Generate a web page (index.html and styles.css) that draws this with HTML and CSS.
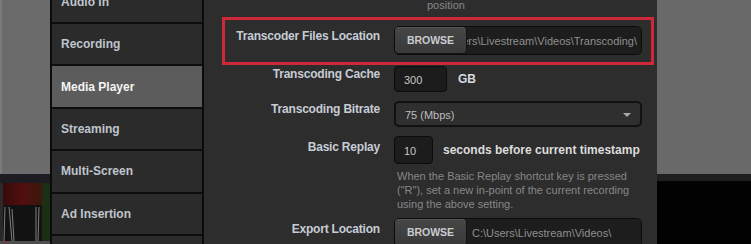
FILE: index.html
```html
<!DOCTYPE html>
<html lang="en">
<head>
<meta charset="utf-8">
<title>Media Player Settings</title>
<link rel="stylesheet" href="styles.css">
</head>
<body>
<div class="app">
  <div class="side">
    <div class="side-top"></div>
    <div class="side-band"></div>
    <svg class="thumb" viewBox="0 0 50 61" width="50" height="61">
      <defs>
        <linearGradient id="redg" x1="0" y1="0" x2="1" y2="0">
          <stop offset="0" stop-color="#360a0a"/>
          <stop offset="0.5" stop-color="#520e0e"/>
          <stop offset="1" stop-color="#3a180c"/>
        </linearGradient>
      </defs>
      <rect x="0" y="0" width="50" height="61" fill="#101010"/>
      <rect x="0" y="0" width="3" height="61" fill="#2a2a2a"/>
      <rect x="3" y="0" width="39" height="22" fill="url(#redg)"/>
      <rect x="42" y="0" width="8" height="58" fill="#1c2e13"/>
      <rect x="3" y="22" width="39" height="36" fill="#121212"/>
      <path d="M5 24 L4 58 M9 24 L12 58 M12 26 L14 58 M36 24 L36 58 M39 24 L38 58" stroke="#7e7e7e" stroke-width="1" fill="none"/>
      <rect x="0" y="58" width="50" height="3" fill="#4e4e4e"/>
      <rect x="5" y="58" width="2" height="2" fill="#b02020"/>
    </svg>
  </div>

  <nav class="nav">
    <ul class="nav-list">
      <li class="nav-item">Audio In</li>
      <li class="nav-item">Recording</li>
      <li class="nav-item is-active">Media Player</li>
      <li class="nav-item">Streaming</li>
      <li class="nav-item">Multi-Screen</li>
      <li class="nav-item">Ad Insertion</li>
      <li class="nav-item">Output</li>
    </ul>
  </nav>

  <main class="panel">
    <p class="hint hint-top">position</p>

    <div class="row row-hl">
      <div class="label label-hl">Transcoder Files Location</div>
      <div class="filefield">
        <button class="btn" type="button">BROWSE</button>
        <div class="path"><span class="path-text">C:\Users\Livestream\Videos\Transcoding\</span></div>
      </div>
    </div>

    <div class="row row-cache">
      <div class="label label-sm">Transcoding Cache</div>
      <div class="inline">
        <div class="num num-cache">300</div>
        <span class="unit">GB</span>
      </div>
    </div>

    <div class="row row-bitrate">
      <div class="label label-sm">Transcoding Bitrate</div>
      <div class="select">
        <span>75 (Mbps)</span>
        <span class="caret"></span>
      </div>
    </div>

    <div class="row row-replay">
      <div class="label label-md">Basic Replay</div>
      <div class="inline">
        <div class="num num-replay">10</div>
        <span class="unit unit-long">seconds before current timestamp</span>
      </div>
    </div>

    <div class="row row-help">
      <div></div>
      <p class="hint help">When the Basic Replay shortcut key is pressed<br>("R"), set a new in-point of the current recording<br>using the above setting.</p>
    </div>

    <div class="row row-export">
      <div class="label label-md">Export Location</div>
      <div class="filefield">
        <button class="btn" type="button">BROWSE</button>
        <div class="path path-left"><span class="path-text">C:\Users\Livestream\Videos\</span></div>
      </div>
    </div>
  </main>

  <div class="preview">
    <div class="preview-top"></div>
    <div class="preview-band"></div>
    <div class="preview-bottom"></div>
  </div>
</div>
</body>
</html>
```

FILE: styles.css
```css
html, body {
  margin: 0;
  padding: 0;
  background: #000;
}

body {
  font-family: "Liberation Sans", Arial, sans-serif;
  font-size: 11px;
}

.app {
  display: flex;
  width: 751px;
  height: 244px;
  overflow: hidden;
}

/* left strip */
.side {
  flex: none;
  width: 50px;
  border-right: 2px solid #0b0b0b;
  display: flex;
  flex-direction: column;
}

.side-top {
  height: 174px;
  background: #6b6b6b;
  box-shadow: inset 2px 0 0 #7a7a7a;
}

.side-band {
  height: 9px;
  background: #1d1c22;
}

.thumb {
  display: block;
  width: 50px;
  height: 61px;
}

/* nav */
.nav {
  flex: none;
  width: 150px;
  border-right: 2px solid #0b0b0b;
  background: #2a2a2a;
  overflow: hidden;
}

.nav-list {
  list-style: none;
  margin: -18.4px 0 0;
  padding: 0;
}

.nav-item {
  height: 40.4px;
  border-bottom: 2px solid #0d0d0d;
  display: flex;
  align-items: center;
  padding-left: 9px;
  font-weight: bold;
  font-size: 12px;
  color: #bfc5cd;
  background: #2b2b2b;
}

.nav-item.is-active {
  background: #5c5c5c;
  color: #f4f4f4;
}

/* main panel */
.panel {
  flex: none;
  width: 453px;
  box-sizing: border-box;
  padding-left: 18px;
  background: #2d2d2d;
}

.hint {
  margin: 0;
  color: #878787;
  font-size: 11px;
  line-height: 14px;
}

.hint-top {
  margin: -2px 0 0 205px;
  height: 14px;
}

.row {
  width: 432px;
  box-sizing: border-box;
  display: grid;
  grid-template-columns: 155px 248px;
  column-gap: 14px;
  align-items: start;
  border-left: 3px solid transparent;
  border-right: 3px solid transparent;
  padding-right: 9px;
}

.row-hl {
  margin-top: 5px;
  border: 3px solid #d0283b;
  padding-top: 6px;
  padding-bottom: 7px;
}

.row-cache { margin-top: 1px; }
.row-bitrate { margin-top: 9px; }
.row-replay { margin-top: 9px; }
.row-help { margin-top: 5px; }
.row-export { margin-top: 7px; }

.label {
  text-align: right;
  font-weight: bold;
  font-size: 12px;
  letter-spacing: -0.2px;
  color: #c6ccd5;
  line-height: 14px;
  white-space: nowrap;
}

.label-hl { padding-top: 3px; }
.label-sm { padding-top: 1px; }
.label-md { padding-top: 4px; }

/* file picker */
.filefield {
  display: flex;
  height: 29px;
  box-sizing: border-box;
  background: #1c1c1c;
  border: 1px solid #0c0c0c;
  border-radius: 5px;
  overflow: hidden;
}

.btn {
  flex: none;
  width: 73px;
  height: 28px;
  margin: -1px 0 0 -1px;
  box-sizing: border-box;
  border: 1px solid #141414;
  border-radius: 4px;
  background: linear-gradient(#464646, #393939);
  box-shadow: inset 0 1px 0 #575757;
  color: #c9ccd0;
  font-family: "Liberation Sans", Arial, sans-serif;
  font-weight: bold;
  font-size: 10.5px;
  padding: 0;
}

.path {
  flex: 1;
  min-width: 0;
  display: flex;
  justify-content: flex-end;
  align-items: center;
  overflow: hidden;
  padding-right: 4px;
  color: #8f8f8f;
  background: #1d1d1d;
}

.path-left {
  justify-content: flex-start;
  padding-left: 5px;
}

.path-text {
  white-space: nowrap;
  flex: none;
}

/* inputs */
.inline {
  display: flex;
  align-items: center;
}

.num {
  box-sizing: border-box;
  background: #1c1c1c;
  border: 1px solid #0b0b0b;
  border-radius: 4px;
  color: #c6c6c6;
  padding-left: 9px;
  display: flex;
  align-items: center;
  padding-top: 2px;
}

.num-cache {
  width: 53px;
  height: 26px;
}

.num-replay {
  width: 39px;
  height: 28px;
}

.unit {
  margin-left: 11px;
  font-weight: bold;
  font-size: 12px;
  color: #d6dae0;
}

.unit-long {
  margin-left: 10px;
  color: #dcdcdc;
}

.select {
  height: 26px;
  box-sizing: border-box;
  border: 2px solid #111;
  border-radius: 5px;
  background: #2f2f2f;
  color: #bdbdbd;
  display: flex;
  align-items: center;
  justify-content: space-between;
  padding: 2px 9px 0 9px;
}

.caret {
  width: 0;
  height: 0;
  border-left: 4px solid transparent;
  border-right: 4px solid transparent;
  border-top: 4px solid #a9a9a9;
  margin-top: -1px;
}

.help {
  padding-left: 3px;
  white-space: nowrap;
}

/* right preview */
.preview {
  flex: none;
  width: 94px;
  display: flex;
  flex-direction: column;
}

.preview-top {
  height: 174px;
  background: #696969;
}

.preview-band {
  height: 7px;
  background: #1f1f1f;
}

.preview-bottom {
  flex: 1;
  background: #020202;
}
```
